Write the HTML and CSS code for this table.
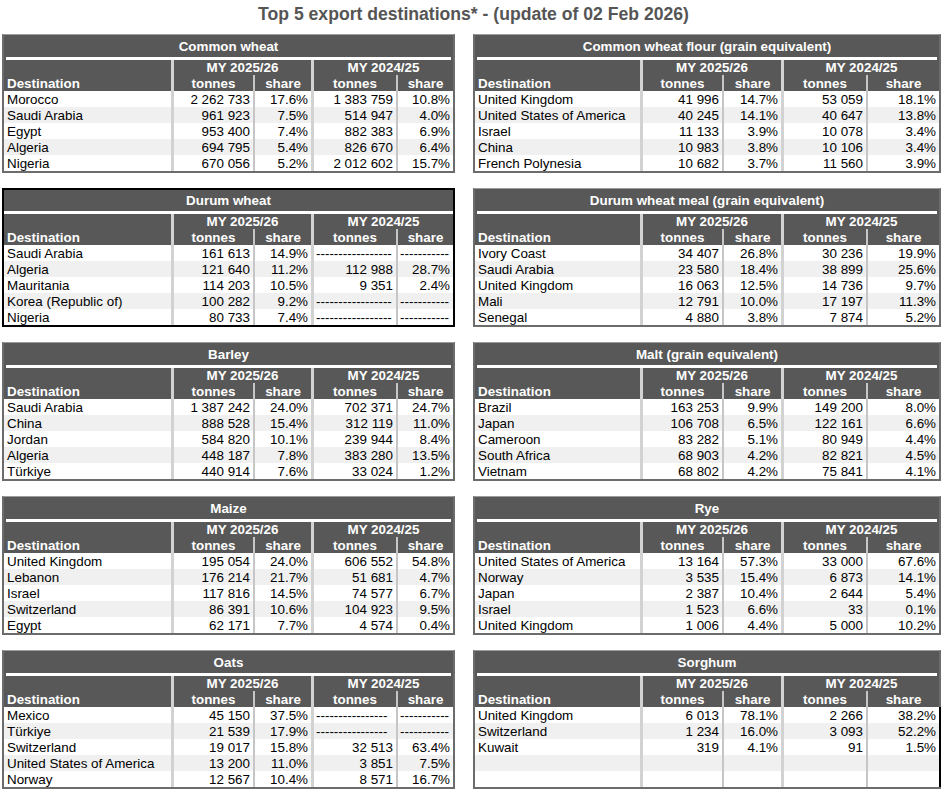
FILE: index.html
```html
<!DOCTYPE html>
<html lang="en">
<head>
<meta charset="utf-8">
<title>Top 5 export destinations</title>
<link rel="stylesheet" href="styles.css">
</head>
<body>
<h1 class="page-title">Top 5 export destinations* - (update of 02 Feb 2026)</h1>
<main class="board">

<section class="tbl tbl-left">
  <div class="cap">Common wheat</div>
  <div class="hd dest">Destination</div>
  <div class="hd my">MY 2025/26</div>
  <div class="hd my">MY 2024/25</div>
  <div class="hd maj">tonnes</div><div class="hd min">share</div><div class="hd maj">tonnes</div><div class="hd min">share</div>
  <div class="row"><span class="c">Morocco</span><span class="n maj">2 262 733</span><span class="n min">17.6%</span><span class="n maj">1 383 759</span><span class="n min">10.8%</span></div>
  <div class="row alt"><span class="c">Saudi Arabia</span><span class="n maj">961 923</span><span class="n min">7.5%</span><span class="n maj">514 947</span><span class="n min">4.0%</span></div>
  <div class="row"><span class="c">Egypt</span><span class="n maj">953 400</span><span class="n min">7.4%</span><span class="n maj">882 383</span><span class="n min">6.9%</span></div>
  <div class="row alt"><span class="c">Algeria</span><span class="n maj">694 795</span><span class="n min">5.4%</span><span class="n maj">826 670</span><span class="n min">6.4%</span></div>
  <div class="row"><span class="c">Nigeria</span><span class="n maj">670 056</span><span class="n min">5.2%</span><span class="n maj">2 012 602</span><span class="n min">15.7%</span></div>
</section>

<section class="tbl tbl-right">
  <div class="cap">Common wheat flour (grain equivalent)</div>
  <div class="hd dest">Destination</div>
  <div class="hd my">MY 2025/26</div>
  <div class="hd my">MY 2024/25</div>
  <div class="hd maj">tonnes</div><div class="hd min">share</div><div class="hd maj">tonnes</div><div class="hd min">share</div>
  <div class="row"><span class="c">United Kingdom</span><span class="n maj">41 996</span><span class="n min">14.7%</span><span class="n maj">53 059</span><span class="n min">18.1%</span></div>
  <div class="row alt"><span class="c">United States of America</span><span class="n maj">40 245</span><span class="n min">14.1%</span><span class="n maj">40 647</span><span class="n min">13.8%</span></div>
  <div class="row"><span class="c">Israel</span><span class="n maj">11 133</span><span class="n min">3.9%</span><span class="n maj">10 078</span><span class="n min">3.4%</span></div>
  <div class="row alt"><span class="c">China</span><span class="n maj">10 983</span><span class="n min">3.8%</span><span class="n maj">10 106</span><span class="n min">3.4%</span></div>
  <div class="row"><span class="c">French Polynesia</span><span class="n maj">10 682</span><span class="n min">3.7%</span><span class="n maj">11 560</span><span class="n min">3.9%</span></div>
</section>

<section class="tbl tbl-left sel">
  <div class="cap">Durum wheat</div>
  <div class="hd dest">Destination</div>
  <div class="hd my">MY 2025/26</div>
  <div class="hd my">MY 2024/25</div>
  <div class="hd maj">tonnes</div><div class="hd min">share</div><div class="hd maj">tonnes</div><div class="hd min">share</div>
  <div class="row"><span class="c">Saudi Arabia</span><span class="n maj">161 613</span><span class="n min">14.9%</span><span class="n maj dash">-----------------</span><span class="n min dash">-----------</span></div>
  <div class="row alt"><span class="c">Algeria</span><span class="n maj">121 640</span><span class="n min">11.2%</span><span class="n maj">112 988</span><span class="n min">28.7%</span></div>
  <div class="row"><span class="c">Mauritania</span><span class="n maj">114 203</span><span class="n min">10.5%</span><span class="n maj">9 351</span><span class="n min">2.4%</span></div>
  <div class="row alt"><span class="c">Korea (Republic of)</span><span class="n maj">100 282</span><span class="n min">9.2%</span><span class="n maj dash">-----------------</span><span class="n min dash">-----------</span></div>
  <div class="row"><span class="c">Nigeria</span><span class="n maj">80 733</span><span class="n min">7.4%</span><span class="n maj dash">-----------------</span><span class="n min dash">-----------</span></div>
</section>

<section class="tbl tbl-right">
  <div class="cap">Durum wheat meal (grain equivalent)</div>
  <div class="hd dest">Destination</div>
  <div class="hd my">MY 2025/26</div>
  <div class="hd my">MY 2024/25</div>
  <div class="hd maj">tonnes</div><div class="hd min">share</div><div class="hd maj">tonnes</div><div class="hd min">share</div>
  <div class="row"><span class="c">Ivory Coast</span><span class="n maj">34 407</span><span class="n min">26.8%</span><span class="n maj">30 236</span><span class="n min">19.9%</span></div>
  <div class="row alt"><span class="c">Saudi Arabia</span><span class="n maj">23 580</span><span class="n min">18.4%</span><span class="n maj">38 899</span><span class="n min">25.6%</span></div>
  <div class="row"><span class="c">United Kingdom</span><span class="n maj">16 063</span><span class="n min">12.5%</span><span class="n maj">14 736</span><span class="n min">9.7%</span></div>
  <div class="row alt"><span class="c">Mali</span><span class="n maj">12 791</span><span class="n min">10.0%</span><span class="n maj">17 197</span><span class="n min">11.3%</span></div>
  <div class="row"><span class="c">Senegal</span><span class="n maj">4 880</span><span class="n min">3.8%</span><span class="n maj">7 874</span><span class="n min">5.2%</span></div>
</section>

<section class="tbl tbl-left">
  <div class="cap">Barley</div>
  <div class="hd dest">Destination</div>
  <div class="hd my">MY 2025/26</div>
  <div class="hd my">MY 2024/25</div>
  <div class="hd maj">tonnes</div><div class="hd min">share</div><div class="hd maj">tonnes</div><div class="hd min">share</div>
  <div class="row"><span class="c">Saudi Arabia</span><span class="n maj">1 387 242</span><span class="n min">24.0%</span><span class="n maj">702 371</span><span class="n min">24.7%</span></div>
  <div class="row alt"><span class="c">China</span><span class="n maj">888 528</span><span class="n min">15.4%</span><span class="n maj">312 119</span><span class="n min">11.0%</span></div>
  <div class="row"><span class="c">Jordan</span><span class="n maj">584 820</span><span class="n min">10.1%</span><span class="n maj">239 944</span><span class="n min">8.4%</span></div>
  <div class="row alt"><span class="c">Algeria</span><span class="n maj">448 187</span><span class="n min">7.8%</span><span class="n maj">383 280</span><span class="n min">13.5%</span></div>
  <div class="row"><span class="c">Türkiye</span><span class="n maj">440 914</span><span class="n min">7.6%</span><span class="n maj">33 024</span><span class="n min">1.2%</span></div>
</section>

<section class="tbl tbl-right">
  <div class="cap">Malt (grain equivalent)</div>
  <div class="hd dest">Destination</div>
  <div class="hd my">MY 2025/26</div>
  <div class="hd my">MY 2024/25</div>
  <div class="hd maj">tonnes</div><div class="hd min">share</div><div class="hd maj">tonnes</div><div class="hd min">share</div>
  <div class="row"><span class="c">Brazil</span><span class="n maj">163 253</span><span class="n min">9.9%</span><span class="n maj">149 200</span><span class="n min">8.0%</span></div>
  <div class="row alt"><span class="c">Japan</span><span class="n maj">106 708</span><span class="n min">6.5%</span><span class="n maj">122 161</span><span class="n min">6.6%</span></div>
  <div class="row"><span class="c">Cameroon</span><span class="n maj">83 282</span><span class="n min">5.1%</span><span class="n maj">80 949</span><span class="n min">4.4%</span></div>
  <div class="row alt"><span class="c">South Africa</span><span class="n maj">68 903</span><span class="n min">4.2%</span><span class="n maj">82 821</span><span class="n min">4.5%</span></div>
  <div class="row"><span class="c">Vietnam</span><span class="n maj">68 802</span><span class="n min">4.2%</span><span class="n maj">75 841</span><span class="n min">4.1%</span></div>
</section>

<section class="tbl tbl-left">
  <div class="cap">Maize</div>
  <div class="hd dest">Destination</div>
  <div class="hd my">MY 2025/26</div>
  <div class="hd my">MY 2024/25</div>
  <div class="hd maj">tonnes</div><div class="hd min">share</div><div class="hd maj">tonnes</div><div class="hd min">share</div>
  <div class="row"><span class="c">United Kingdom</span><span class="n maj">195 054</span><span class="n min">24.0%</span><span class="n maj">606 552</span><span class="n min">54.8%</span></div>
  <div class="row alt"><span class="c">Lebanon</span><span class="n maj">176 214</span><span class="n min">21.7%</span><span class="n maj">51 681</span><span class="n min">4.7%</span></div>
  <div class="row"><span class="c">Israel</span><span class="n maj">117 816</span><span class="n min">14.5%</span><span class="n maj">74 577</span><span class="n min">6.7%</span></div>
  <div class="row alt"><span class="c">Switzerland</span><span class="n maj">86 391</span><span class="n min">10.6%</span><span class="n maj">104 923</span><span class="n min">9.5%</span></div>
  <div class="row"><span class="c">Egypt</span><span class="n maj">62 171</span><span class="n min">7.7%</span><span class="n maj">4 574</span><span class="n min">0.4%</span></div>
</section>

<section class="tbl tbl-right">
  <div class="cap">Rye</div>
  <div class="hd dest">Destination</div>
  <div class="hd my">MY 2025/26</div>
  <div class="hd my">MY 2024/25</div>
  <div class="hd maj">tonnes</div><div class="hd min">share</div><div class="hd maj">tonnes</div><div class="hd min">share</div>
  <div class="row"><span class="c">United States of America</span><span class="n maj">13 164</span><span class="n min">57.3%</span><span class="n maj">33 000</span><span class="n min">67.6%</span></div>
  <div class="row alt"><span class="c">Norway</span><span class="n maj">3 535</span><span class="n min">15.4%</span><span class="n maj">6 873</span><span class="n min">14.1%</span></div>
  <div class="row"><span class="c">Japan</span><span class="n maj">2 387</span><span class="n min">10.4%</span><span class="n maj">2 644</span><span class="n min">5.4%</span></div>
  <div class="row alt"><span class="c">Israel</span><span class="n maj">1 523</span><span class="n min">6.6%</span><span class="n maj">33</span><span class="n min">0.1%</span></div>
  <div class="row"><span class="c">United Kingdom</span><span class="n maj">1 006</span><span class="n min">4.4%</span><span class="n maj">5 000</span><span class="n min">10.2%</span></div>
</section>

<section class="tbl tbl-left">
  <div class="cap">Oats</div>
  <div class="hd dest">Destination</div>
  <div class="hd my">MY 2025/26</div>
  <div class="hd my">MY 2024/25</div>
  <div class="hd maj">tonnes</div><div class="hd min">share</div><div class="hd maj">tonnes</div><div class="hd min">share</div>
  <div class="row"><span class="c">Mexico</span><span class="n maj">45 150</span><span class="n min">37.5%</span><span class="n maj dash">----------------</span><span class="n min dash">-----------</span></div>
  <div class="row alt"><span class="c">Türkiye</span><span class="n maj">21 539</span><span class="n min">17.9%</span><span class="n maj dash">----------------</span><span class="n min dash">-----------</span></div>
  <div class="row"><span class="c">Switzerland</span><span class="n maj">19 017</span><span class="n min">15.8%</span><span class="n maj">32 513</span><span class="n min">63.4%</span></div>
  <div class="row alt"><span class="c">United States of America</span><span class="n maj">13 200</span><span class="n min">11.0%</span><span class="n maj">3 851</span><span class="n min">7.5%</span></div>
  <div class="row"><span class="c">Norway</span><span class="n maj">12 567</span><span class="n min">10.4%</span><span class="n maj">8 571</span><span class="n min">16.7%</span></div>
</section>

<section class="tbl tbl-right edge">
  <div class="cap">Sorghum</div>
  <div class="hd dest">Destination</div>
  <div class="hd my">MY 2025/26</div>
  <div class="hd my">MY 2024/25</div>
  <div class="hd maj">tonnes</div><div class="hd min">share</div><div class="hd maj">tonnes</div><div class="hd min">share</div>
  <div class="row"><span class="c">United Kingdom</span><span class="n maj">6 013</span><span class="n min">78.1%</span><span class="n maj">2 266</span><span class="n min">38.2%</span></div>
  <div class="row alt"><span class="c">Switzerland</span><span class="n maj">1 234</span><span class="n min">16.0%</span><span class="n maj">3 093</span><span class="n min">52.2%</span></div>
  <div class="row"><span class="c">Kuwait</span><span class="n maj">319</span><span class="n min">4.1%</span><span class="n maj">91</span><span class="n min">1.5%</span></div>
  <div class="row alt"><span class="c"></span><span class="n maj"></span><span class="n min"></span><span class="n maj"></span><span class="n min"></span></div>
  <div class="row"><span class="c"></span><span class="n maj"></span><span class="n min"></span><span class="n maj"></span><span class="n min"></span></div>
</section>

</main>
</body>
</html>
```

FILE: styles.css
```css
* {
  box-sizing: border-box;
}

html, body {
  margin: 0;
  padding: 0;
  background: #ffffff;
}

body {
  font-family: "Liberation Sans", Arial, sans-serif;
  font-size: 13.4px;
  color: #000;
}

.page-title {
  margin: 4px 0 10px;
  height: 20px;
  line-height: 20px;
  font-size: 17.6px;
  font-weight: bold;
  color: #555555;
  text-align: center;
}

.board {
  display: grid;
  grid-template-columns: 453px 468px;
  column-gap: 18px;
  row-gap: 15px;
  padding-left: 2px;
}

.tbl {
  display: grid;
  grid-template-rows: 25px 15px 16px repeat(5, 16px);
  background: #585858;
  border: 2px solid #6c6c6c;
  border-top: 1px solid #9c9c9c;
}

.tbl-left {
  grid-template-columns: 167px 82px 58px 85px 57px;
}

.tbl-right {
  grid-template-columns: 165px 82px 59px 85px 73px;
}

.tbl.sel {
  border-color: #000;
  border-top: 2px solid #000;
  grid-template-rows: 24px 15px 16px repeat(5, 16px);
}

.cap {
  grid-column: 1 / -1;
  color: #fff;
  font-weight: bold;
  text-align: center;
  padding-top: 1px;
  line-height: 21px;
  background: linear-gradient(#fff, #fff) no-repeat center bottom / calc(100% - 4px) 3px, #585858;
}

.sel .cap {
  padding-top: 0;
  background: linear-gradient(#fff, #fff) no-repeat center bottom / 100% 3px, #585858;
}

.hd {
  color: #fff;
  font-weight: bold;
  text-align: center;
  line-height: 16px;
  white-space: nowrap;
}

.hd.maj,
.hd.min {
  padding-top: 1px;
  line-height: 15px;
}

.hd.dest {
  grid-column: 1;
  grid-row: 2 / span 2;
  text-align: left;
  padding-left: 3px;
  display: flex;
  align-items: flex-end;
  line-height: 14px;
}

.hd.my {
  grid-column: span 2;
  line-height: 15px;
  border-left: 3px solid #d2d2d2;
}

.maj {
  border-left: 3px solid #d2d2d2;
}

.min {
  border-left: 2px solid #c6c6c6;
}

.row {
  display: contents;
}

.row > span {
  display: block;
  height: 16px;
  padding-top: 1px;
  line-height: 15px;
  background: #ffffff;
  white-space: pre;
  overflow: hidden;
}

.row.alt > span {
  background: #f0f0f0;
}

.c {
  padding-left: 3px;
}

.n {
  text-align: right;
  padding-right: 3px;
}

.n.dash {
  text-align: left;
  padding-left: 2px;
  padding-right: 0;
}

.edge .row > span:last-child {
  box-shadow: 2px 0 0 #000;
}
```
